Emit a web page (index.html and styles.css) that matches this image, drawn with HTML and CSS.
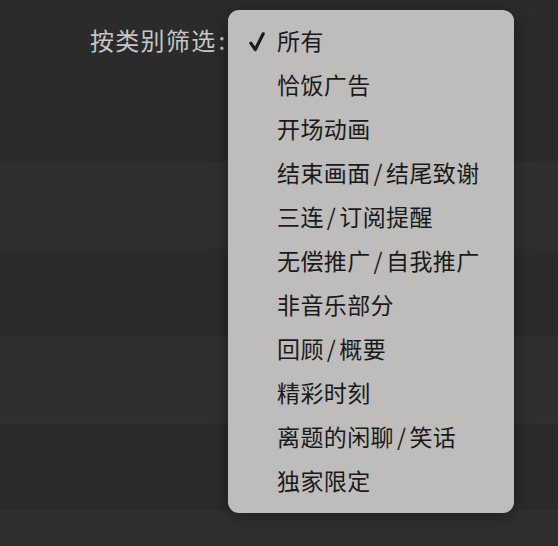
FILE: index.html
```html
<!DOCTYPE html>
<html lang="zh-CN">
<head>
<meta charset="utf-8">
<title>按类别筛选</title>
<link rel="stylesheet" href="styles.css">
</head>
<body>
<div class="page">
  <div class="header">
    <span class="label">按类别筛选<span class="colon">:</span></span>
  </div>
  <div class="row alt"></div>
  <div class="row"></div>
  <div class="row alt"></div>
  <div class="row"></div>
  <div class="row alt last"></div>

  <ul class="menu">
    <li class="item selected">
      <svg class="check" viewBox="0 0 16 20" width="16" height="20"><polyline points="1.8,11.2 6.3,17.6 14.2,1.8" fill="none" stroke="#1c1c1c" stroke-width="3.2" stroke-linecap="round" stroke-linejoin="round"/></svg>
      <span>所有</span>
    </li>
    <li class="item"><span>恰饭广告</span></li>
    <li class="item"><span>开场动画</span></li>
    <li class="item"><span>结束画面<span class="sep">/</span>结尾致谢</span></li>
    <li class="item"><span>三连<span class="sep">/</span>订阅提醒</span></li>
    <li class="item"><span>无偿推广<span class="sep">/</span>自我推广</span></li>
    <li class="item"><span>非音乐部分</span></li>
    <li class="item"><span>回顾<span class="sep">/</span>概要</span></li>
    <li class="item"><span>精彩时刻</span></li>
    <li class="item"><span>离题的闲聊<span class="sep">/</span>笑话</span></li>
    <li class="item"><span>独家限定</span></li>
  </ul>
</div>
</body>
</html>
```

FILE: styles.css
```css
html, body {
  margin: 0;
  padding: 0;
  background: #2b2b2b;
}

body {
  font-family: "Noto Sans CJK SC", "Noto Sans", sans-serif;
  width: 558px;
  height: 546px;
  overflow: hidden;
}

.page {
  position: relative;
  display: flex;
  flex-direction: column;
  height: 546px;
  overflow: hidden;
}

.header {
  height: 162px;
  flex: none;
  box-sizing: border-box;
  padding-left: 90px;
  padding-top: 23px;
}

.label {
  display: block;
  color: #c6c6c6;
  font-size: 24px;
  line-height: 34px;
  letter-spacing: 1.3px;
}

.colon {
  padding-left: 2px;
}

.row {
  height: 87px;
  flex: none;
  background: #2b2b2b;
}

.row.alt {
  background: #2f2f2f;
}

.row.last {
  height: 36px;
}

.menu {
  position: absolute;
  left: 228px;
  top: 10px;
  width: 286px;
  margin: 0;
  padding: 8px 0 11px 0;
  list-style: none;
  background: #bebdbb;
  border-radius: 11px;
  box-shadow: 0 4px 18px rgba(0, 0, 0, 0.35);
}

.item {
  position: relative;
  height: 44px;
  display: flex;
  align-items: center;
  padding-left: 49px;
  color: #1a1a1a;
  font-size: 23px;
  letter-spacing: 0.4px;
  line-height: 44px;
}

.sep {
  padding: 0 3px;
}

.check {
  position: absolute;
  left: 21px;
  top: 14px;
}
```
